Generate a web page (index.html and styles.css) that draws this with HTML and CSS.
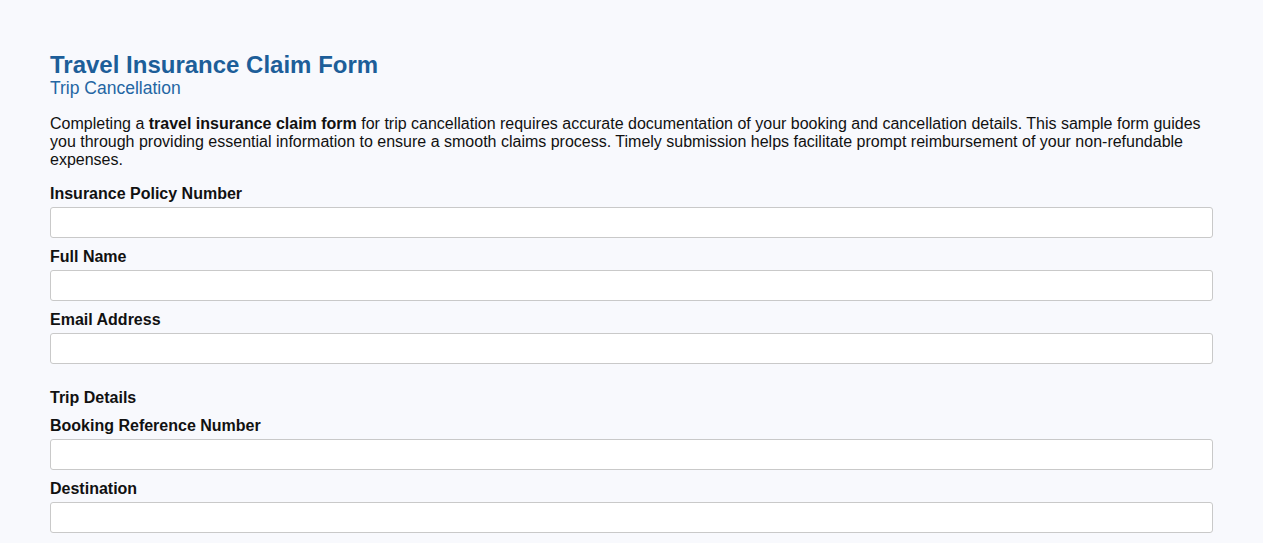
FILE: index.html
```html
<!DOCTYPE html>
<html lang="en">
<head>
<meta charset="utf-8">
<title>Travel Insurance Claim Form</title>
<link rel="stylesheet" href="styles.css">
</head>
<body>
<main class="page">
  <h1 class="title">Travel Insurance Claim Form</h1>
  <h2 class="subtitle">Trip Cancellation</h2>
  <p class="intro">Completing a <strong>travel insurance claim form</strong> for trip cancellation requires accurate documentation of your booking and cancellation details. This sample form guides you through providing essential information to ensure a smooth claims process. Timely submission helps facilitate prompt reimbursement of your non-refundable expenses.</p>
  <form class="form">
    <div class="field">
      <label class="label" for="policy">Insurance Policy Number</label>
      <input class="input" id="policy" type="text">
    </div>
    <div class="field">
      <label class="label" for="name">Full Name</label>
      <input class="input" id="name" type="text">
    </div>
    <div class="field">
      <label class="label" for="email">Email Address</label>
      <input class="input" id="email" type="email">
    </div>
    <div class="section">Trip Details</div>
    <div class="field">
      <label class="label" for="booking">Booking Reference Number</label>
      <input class="input" id="booking" type="text">
    </div>
    <div class="field">
      <label class="label" for="dest">Destination</label>
      <input class="input" id="dest" type="text">
    </div>
  </form>
</main>
</body>
</html>
```
FILE: styles.css
```css
html, body {
  margin: 0;
  padding: 0;
  background: #f8f9fd;
}
body {
  font-family: "Liberation Sans", Arial, sans-serif;
  color: #111;
  font-size: 16px;
}
.page {
  padding: 51px 50px 40px;
}
.title {
  margin: 0;
  font-size: 24px;
  font-weight: bold;
  color: #1d5e99;
  line-height: 27px;
}
.subtitle {
  margin: 0;
  font-size: 17.5px;
  font-weight: normal;
  color: #2466a3;
  line-height: 20px;
}
.intro {
  margin: 17px 0 16px;
  line-height: 18px;
}
.form {
  display: flex;
  flex-direction: column;
}
.field {
  display: flex;
  flex-direction: column;
  margin-bottom: 10px;
}
.label {
  font-weight: bold;
  line-height: 18px;
  margin-bottom: 4px;
}
.input {
  box-sizing: border-box;
  height: 31px;
  width: 100%;
  border: 1px solid #c9c9c9;
  border-radius: 3px;
  background: #fff;
  font: inherit;
  padding: 4px 8px;
}
.section {
  font-weight: bold;
  line-height: 18px;
  margin: 15px 0 10px;
}
```
